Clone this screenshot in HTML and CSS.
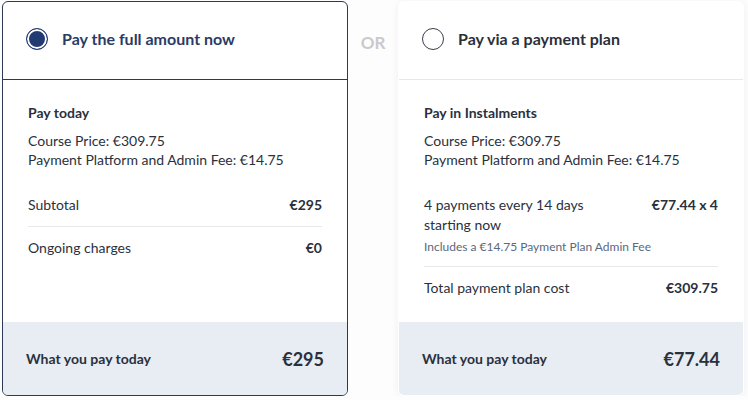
FILE: index.html
```html
<!DOCTYPE html>
<html lang="en">
<head>
    <meta charset="UTF-8">
    <meta name="viewport" content="width=device-width, initial-scale=1.0">
    <title>Payment Options</title>
    <link rel="stylesheet" href="styles.css">
</head>
<body>
    <div class="options">
        <div class="card selected">
            <div class="card-header">
                <span class="radio checked"></span>
                <span class="option-title">Pay the full amount now</span>
            </div>
            <div class="card-body">
                <div class="section-title">Pay today</div>
                <div class="details">
                    <p>Course Price: €309.75</p>
                    <p>Payment Platform and Admin Fee: €14.75</p>
                </div>
                <div class="row">
                    <span>Subtotal</span>
                    <span class="value">€295</span>
                </div>
                <div class="row">
                    <span>Ongoing charges</span>
                    <span class="value">€0</span>
                </div>
            </div>
            <div class="card-footer">
                <span>What you pay today</span>
                <span class="total">€295</span>
            </div>
        </div>

        <div class="or">OR</div>

        <div class="card">
            <div class="card-header">
                <span class="radio"></span>
                <span class="option-title">Pay via a payment plan</span>
            </div>
            <div class="card-body">
                <div class="section-title">Pay in Instalments</div>
                <div class="details">
                    <p>Course Price: €309.75</p>
                    <p>Payment Platform and Admin Fee: €14.75</p>
                </div>
                <div class="row">
                    <div>
                        <div class="plan-text">4 payments every 14 days<br>starting now</div>
                        <div class="note">Includes a €14.75 Payment Plan Admin Fee</div>
                    </div>
                    <span class="value">€77.44 x 4</span>
                </div>
                <div class="row">
                    <span>Total payment plan cost</span>
                    <span class="value">€309.75</span>
                </div>
            </div>
            <div class="card-footer">
                <span>What you pay today</span>
                <span class="total">€77.44</span>
            </div>
        </div>
    </div>
</body>
</html>
```

FILE: styles.css
```css
body {
    margin: 0;
    padding: 1px 4px 0 2px;
    font-family: Lato, "Open Sans", sans-serif;
    color: #2a313d;
    background-color: #fdfdfe;
}
.options {
    display: flex;
    align-items: flex-start;
}
.card {
    width: 346px;
    height: 395px;
    box-sizing: border-box;
    display: flex;
    flex-direction: column;
    background-color: #fff;
    border-radius: 6px;
    border: 1px solid transparent;
    box-shadow: 0 1px 8px rgba(30, 40, 70, 0.06);
    overflow: hidden;
}
.card.selected {
    border-color: #2c3a55;
    box-shadow: none;
}
.card-header {
    height: 78px;
    box-sizing: border-box;
    display: flex;
    align-items: center;
    padding: 0 0 4px 23px;
    border-bottom: 1px solid #e6e8ec;
}
.card.selected .card-header {
    border-bottom-color: #2c3a55;
}
.radio {
    width: 22px;
    height: 22px;
    box-sizing: border-box;
    border-radius: 50%;
    border: 1.5px solid #3a3f4a;
    background-color: #fff;
    margin-right: 14px;
}
.radio.checked {
    border-color: #223a72;
    background-color: #223a72;
    box-shadow: inset 0 0 0 2px #fff;
}
.option-title {
    font-size: 16px;
    font-weight: 700;
    color: #2a2f3a;
}
.card.selected .option-title {
    color: #2a3b66;
}
.card-body {
    flex: 1;
    padding: 24px 25px 0 25px;
    font-size: 14px;
}
.section-title {
    font-weight: 700;
    line-height: 18px;
}
.details {
    margin-top: 9px;
    margin-bottom: 15px;
}
.details p {
    margin: 0;
    line-height: 19px;
}
.row {
    display: flex;
    justify-content: space-between;
    align-items: flex-start;
    padding: 11px 0;
    line-height: 20px;
}
.row + .row {
    border-top: 1px solid #e6e8ec;
}
.row:first-of-type {
    padding-top: 0;
}
.value {
    font-weight: 700;
}
.note {
    font-size: 12px;
    line-height: 16px;
    color: #5a6880;
    margin-top: 4px;
}
.card-footer {
    height: 73px;
    display: flex;
    justify-content: space-between;
    align-items: center;
    padding: 0 23px;
    background-color: #e8edf4;
    font-size: 14px;
    font-weight: 700;
}
.total {
    font-size: 18px;
}
.or {
    width: 50px;
    text-align: center;
    padding-top: 31px;
    font-size: 17px;
    font-weight: 700;
    color: #cacaca;
}
```
